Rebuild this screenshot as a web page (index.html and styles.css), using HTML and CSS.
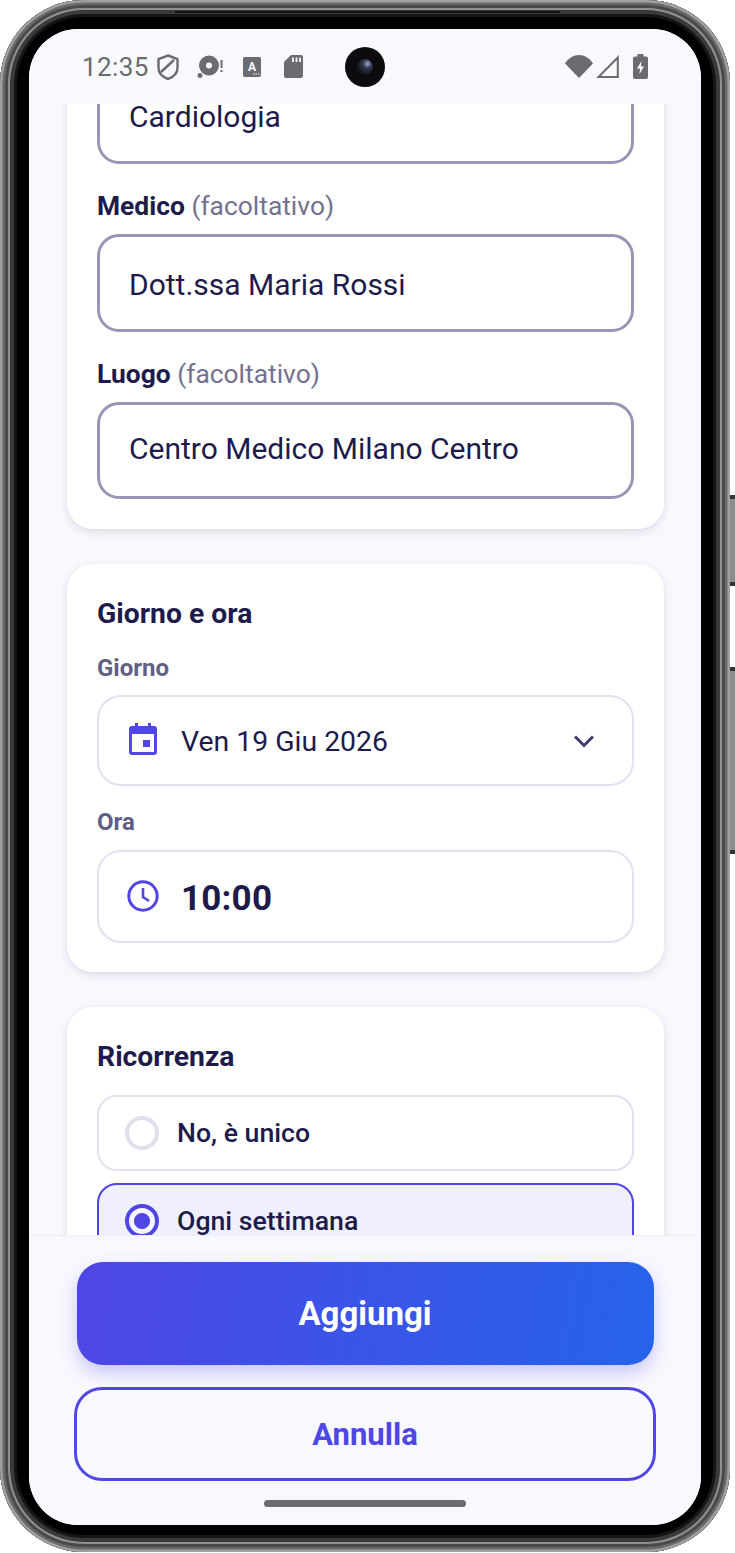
FILE: index.html
```html
<!DOCTYPE html>
<html lang="it">
<head>
<meta charset="utf-8">
<title>Aggiungi appuntamento</title>
<link rel="stylesheet" href="styles.css">
</head>
<body>
<div class="device">
  <span class="side-key key-power"></span>
  <span class="side-key key-volume"></span>
  <span class="top-seam"></span>
  <div class="screen">
    <header class="status">
      <div class="status-left">
        <span class="clock">12:35</span>
        <svg class="ic-shield" viewBox="0 0 22 26"><path d="M11 1.500 20.500 5v8.500c0 5.500-4 9.500-9.500 11.500C5.500 23 1.500 19 1.500 13.500V5Z" fill="none" stroke="#6b6b70" stroke-width="2.400"/><path d="M4 18 17 6" stroke="#6b6b70" stroke-width="2.400"/></svg>
        <svg class="ic-disc" viewBox="0 0 26 26"><circle cx="12" cy="11.500" r="10" fill="#6b6b70"/><circle cx="12" cy="11.500" r="3" fill="#f8f9fe"/><circle cx="3" cy="21.500" r="3" fill="#6b6b70" stroke="#f8f9fe" stroke-width="1"/><rect x="23.500" y="6" width="2" height="8" fill="#6b6b70"/><rect x="23.500" y="16" width="2" height="2" fill="#6b6b70"/></svg>
        <svg class="ic-a" viewBox="0 0 18 20"><rect width="18" height="20" rx="2" fill="#6b6b70"/><text x="9" y="13.500" class="ic-a-text">A</text><path d="M10 17h1.500M12.500 17H14M15 17h1.500" stroke="#f8f9fe" stroke-width="1.200"/></svg>
        <svg class="ic-sd" viewBox="0 0 19 23"><path d="M7 0h10a2 2 0 0 1 2 2v19a2 2 0 0 1-2 2H2a2 2 0 0 1-2-2V7Z" fill="#6b6b70"/><path d="M9 2.500V7M12.500 2.500V7M16 2.500V7" stroke="#f8f9fe" stroke-width="1.800"/></svg>
      </div>
      <span class="camera"><span class="lens"></span></span>
      <div class="status-right">
        <svg class="ic-wifi" viewBox="0 0 28 23"><path d="M14 23 0 8.500C3.500 3 8.500 0 14 0s10.500 3 14 8.500Z" fill="#6b6b70"/></svg>
        <svg class="ic-signal" viewBox="0 0 23 23"><path d="M21.800 2.500V22H2.500Z" fill="none" stroke="#6b6b70" stroke-width="2"/></svg>
        <svg class="ic-batt" viewBox="0 0 15 25"><path d="M4.500 0h6v2.500H13a2 2 0 0 1 2 2V23a2 2 0 0 1-2 2H2a2 2 0 0 1-2-2V4.500a2 2 0 0 1 2-2h2.500Z" fill="#6b6b70"/><path d="M8.500 7 4 14.500h3L6.500 20 11 12.500H8Z" fill="#f8f9fe"/></svg>
      </div>
    </header>

    <main class="scroll">
      <div class="scroll-inner">
        <section class="card card-place">
          <div class="input input-clipped">Cardiologia</div>
          <p class="label"><b>Medico</b> <span>(facoltativo)</span></p>
          <div class="input input-medico">Dott.ssa Maria Rossi</div>
          <p class="label"><b>Luogo</b> <span>(facoltativo)</span></p>
          <div class="input input-luogo">Centro Medico Milano Centro</div>
        </section>

        <section class="card card-time">
          <h2 class="card-title">Giorno e ora</h2>
          <p class="sublabel">Giorno</p>
          <div class="picker picker-day">
            <svg class="ic-cal" viewBox="0 0 28 32"><path d="M6 0h3v3h10V0h3v3h3a3 3 0 0 1 3 3v23a3 3 0 0 1-3 3H3a3 3 0 0 1-3-3V6a3 3 0 0 1 3-3h3Z M3 11v18h22V11Z" fill="#4f46e5" fill-rule="evenodd"/><rect x="14" y="17" width="7" height="7" fill="#4f46e5"/></svg>
            <span class="picker-text">Ven 19 Giu 2026</span>
            <svg class="ic-chev" viewBox="0 0 22 14"><path d="M2 2.500 11 11.500 20 2.500" fill="none" stroke="#3f3d6b" stroke-width="3"/></svg>
          </div>
          <p class="sublabel sublabel-ora">Ora</p>
          <div class="picker picker-hour">
            <svg class="ic-clock" viewBox="0 0 32 32"><circle cx="16" cy="16" r="14.200" fill="none" stroke="#4f46e5" stroke-width="3"/><path d="M16 8v9l6 4" fill="none" stroke="#4f46e5" stroke-width="2.600"/></svg>
            <span class="picker-time">10:00</span>
          </div>
        </section>

        <section class="card card-repeat">
          <h2 class="card-title">Ricorrenza</h2>
          <div class="option"><span class="radio"></span><span>No, è unico</span></div>
          <div class="option option-on"><span class="radio radio-on"></span><span>Ogni settimana</span></div>
        </section>
      </div>
    </main>

    <footer class="actions">
      <button class="btn-primary">Aggiungi</button>
      <button class="btn-outline">Annulla</button>
      <span class="home-bar"></span>
    </footer>
  </div>
</div>
</body>
</html>
```

FILE: styles.css
```css
* { box-sizing: border-box; }
html, body { margin: 0; padding: 0; background: #fff; }
body { font-family: Roboto, "Noto Sans", sans-serif; color: #1e1b4b; width: 735px; height: 1553px; overflow: hidden; }

.device {
  position: relative;
  width: 730px;
  height: 1552px;
  padding: 29px 29px 27px;
  border-radius: 84px;
  background: #000;
  box-shadow:
    inset 0 0 0 2.500px #a0a0a0,
    inset 0 0 0 5px #6a6a6a,
    inset 0 0 0 8px #4a4a4a,
    inset 0 0 0 10px #909090,
    inset 0 0 0 14px #3a3a3a,
    inset 0 0 0 17px #151515;
}
.side-key { position: absolute; left: 730px; width: 5px; background: #8d8d8d; border-top: 4px solid #333; border-bottom: 4px solid #333; }
.key-power { top: 495px; height: 91px; }
.key-volume { top: 667px; height: 187px; }
.top-seam { position: absolute; top: 11px; left: 175px; width: 385px; height: 2px; background: #111; }

.screen {
  width: 672px;
  height: 1496px;
  display: flex;
  flex-direction: column;
  overflow: hidden;
  border-radius: 49px;
  background: #f8f9fe;
}

.status {
  flex: none;
  height: 75px;
  padding: 0 53px;
  display: grid;
  grid-template-columns: 1fr auto 1fr;
  align-items: center;
  background: #f8f9fe;
  position: relative;
  z-index: 1;
}
.status-left { display: flex; align-items: center; }
.status-right { display: flex; align-items: center; justify-content: flex-end; }
.clock { font-size: 26px; letter-spacing: .4px; color: #6b6b70; margin-right: 8px; }
.ic-shield { width: 22px; height: 26px; margin-right: 18px; }
.ic-disc { width: 26px; height: 26px; margin-right: 20px; }
.ic-a { width: 18px; height: 20px; margin-right: 23px; }
.ic-a-text { font: 700 12px Roboto, sans-serif; fill: #f8f9fe; text-anchor: middle; }
.ic-sd { width: 19px; height: 23px; }
.camera { width: 40px; height: 40px; border-radius: 50%; background: #0c0c0e; display: flex; align-items: center; justify-content: center; }
.lens { width: 16px; height: 16px; border-radius: 50%; background: radial-gradient(circle at 65% 30%, #8f88b8 0 8%, #2c3a4c 28%, #14141a 70%); }
.ic-wifi { width: 28px; height: 23px; margin-right: 3px; }
.ic-signal { width: 23px; height: 23px; margin-right: 14px; }
.ic-batt { width: 15px; height: 25px; }

.scroll { flex: 1 1 0; min-height: 0; overflow: hidden; }
.scroll-inner { padding: 0 37px 0 38px; display: flex; flex-direction: column; gap: 35px; margin-top: -54px; }

.card {
  background: #fff;
  border-radius: 26px;
  padding: 30px;
  box-shadow: 0 3px 9px rgba(30, 27, 75, .13);
}
.card-time { padding-bottom: 29px; }
.input {
  border: 3px solid #9a95b5;
  border-radius: 22px;
  padding: 0 29px;
  display: flex;
  align-items: center;
  font-size: 30px;
  color: #1e1b4b;
  background: #fff;
}
.input-clipped { height: 94px; margin-top: -10px; padding-bottom: 2px; }
.input-medico { height: 98px; padding-top: 2px; }
.input-luogo { height: 97px; padding-bottom: 4px; }
.label { margin: 27px 0 13px; font-size: 26.400px; line-height: 30px; color: #74718f; }
.label b { font-weight: 700; color: #1e1b4b; }

.card-title { margin: 4px 0 0; font-size: 28.300px; line-height: 32px; font-weight: 700; color: #1e1b4b; }
.sublabel { margin: 24px 0 13px; font-size: 24px; line-height: 28px; font-weight: 700; color: #615e88; }
.sublabel-ora { margin: 22px 0 14px; }
.picker {
  border: 2px solid #e3e1f1;
  border-radius: 24px;
  display: flex;
  align-items: center;
  padding: 0 37px 0 30px;
}
.picker-day { height: 91px; }
.picker-hour { height: 93px; }
.ic-cal { width: 28px; height: 32px; margin-right: 24px; margin-top: -4px; }
.ic-clock { width: 32px; height: 32px; margin-left: -2px; margin-right: 22px; margin-top: -2px; }
.picker-text { flex: 1; font-size: 28.400px; padding-top: 2px; color: #1e1b4b; }
.picker-time { font-size: 35px; font-weight: 700; letter-spacing: .2px; padding-top: 3px; color: #1e1b4b; }
.ic-chev { width: 22px; height: 14px; }

.card-repeat .card-title { margin-bottom: 22px; }
.option {
  height: 76px;
  border: 2px solid #e3e1f1;
  border-radius: 20px;
  display: flex;
  align-items: center;
  gap: 18px;
  padding: 0 26px;
  font-size: 26.700px;
  font-weight: 500;
  color: #1e1b4b;
  margin-bottom: 12px;
}
.option-on { border-color: #4f46e5; background: #f0f0fc; }
.radio { width: 34px; height: 34px; border-radius: 50%; border: 4px solid #e0dfeb; background: #fff; flex: none; }
.radio-on { border-color: #4f46e5; background: radial-gradient(circle, #4f46e5 0 7.500px, #f6f6fe 8.500px); }

.actions {
  flex: none;
  height: 290px;
  border-top: 1px solid #eceef5;
  background: #f8f9fe;
  display: flex;
  flex-direction: column;
  align-items: center;
  padding-top: 26px;
  position: relative;
  z-index: 1;
}
.btn-primary {
  width: 577px;
  height: 103px;
  border: 0;
  border-radius: 26px;
  background: linear-gradient(100deg, #4f46e5, #2563eb);
  box-shadow: 0 8px 18px rgba(79, 70, 229, .28);
  color: #fff;
  font: 700 33px Roboto, sans-serif;
}
.btn-outline {
  width: 582px;
  height: 94px;
  margin-top: 22px;
  border: 3px solid #4f46e5;
  border-radius: 28px;
  background: transparent;
  color: #4f46e5;
  font: 700 31px Roboto, sans-serif;
}
.home-bar { width: 202px; height: 7px; margin-top: 19px; border-radius: 4px; background: #6b6b70; }
```
